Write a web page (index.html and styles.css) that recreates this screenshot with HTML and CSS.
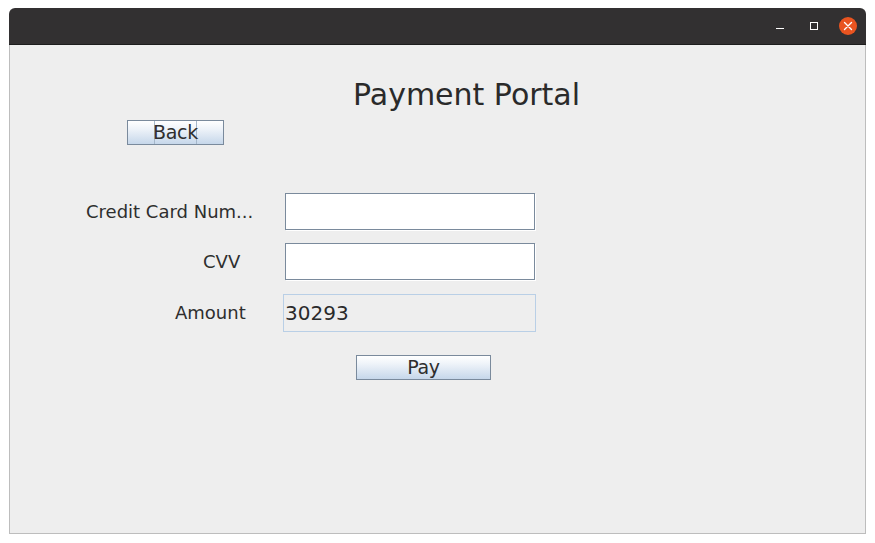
FILE: index.html
```html
<!DOCTYPE html>
<html>
<head>
<meta charset="utf-8">
<link rel="stylesheet" href="styles.css">
</head>
<body>
<div class="window">
  <div class="titlebar">
    <span class="ctl ctl-min"><svg width="10" height="10" viewBox="0 0 10 10"><line x1="1" y1="7.5" x2="9" y2="7.5" stroke="#fff" stroke-width="1"/></svg></span>
    <span class="ctl ctl-max"><svg width="10" height="10" viewBox="0 0 10 10"><rect x="1.5" y="1.5" width="7" height="7" fill="none" stroke="#fff" stroke-width="1"/></svg></span>
    <span class="ctl ctl-close"><svg width="18" height="18" viewBox="0 0 18 18"><circle cx="9" cy="9" r="9" fill="#e95420"/><path d="M5.5 5.5 L12.5 12.5 M12.5 5.5 L5.5 12.5" stroke="#fff" stroke-width="1.4" stroke-linecap="round"/></svg></span>
  </div>
  <div class="content">
    <div class="title">Payment Portal</div>
    <button class="btn btn-back"><span class="focus">Back</span></button>
    <div class="form">
      <label class="lbl lbl-card">Credit Card Num...</label>
      <div class="field"></div>
      <label class="lbl lbl-cvv">CVV</label>
      <div class="field"></div>
      <label class="lbl lbl-amount">Amount</label>
      <div class="field field-ro">30293</div>
    </div>
    <button class="btn btn-pay">Pay</button>
  </div>
</div>
</body>
</html>
```

FILE: styles.css
```css
html, body {
  margin: 0;
  padding: 0;
  background: #ffffff;
}
body {
  font-family: "DejaVu Sans", "Liberation Sans", sans-serif;
  color: #333333;
}
.window {
  margin: 8px 9px 0 9px;
  width: 857px;
  height: 526px;
  display: flex;
  flex-direction: column;
}
.titlebar {
  height: 36px;
  background: #323031;
  border-radius: 6px 6px 0 0;
  border-bottom: 1px solid #1d1d1d;
  display: flex;
  align-items: center;
  justify-content: flex-end;
  padding-right: 9px;
}
.ctl {
  display: flex;
  align-items: center;
  justify-content: center;
}
.ctl-min { margin-right: 24px; }
.ctl-max { margin-right: 20px; }
.ctl-close { width: 18px; height: 18px; }
.content {
  flex: 1;
  background: #eeeeee;
  border: 1px solid #bdbdbd;
  border-top: none;
  position: relative;
}
.title {
  margin-top: 32px;
  padding-left: 343px;
  font-size: 30px;
  line-height: 35px;
  color: #2a2a2a;
}
.btn {
  display: block;
  font-family: "DejaVu Sans", sans-serif;
  font-size: 19px;
  letter-spacing: -0.3px;
  color: #2e2e2e;
  height: 25px;
  padding: 0;
  border: 1px solid #7a8a9c;
  background: linear-gradient(#ffffff 0%, #eef3f9 35%, #c6d7ea 100%);
  line-height: 23px;
  text-align: center;
}
.btn-back {
  margin: 8px 0 0 117px;
  width: 97px;
  display: flex;
  justify-content: center;
}
.focus {
  display: flex;
  justify-content: center;
  width: 43px;
  height: 23px;
  box-sizing: border-box;
  border-left: 1px solid #a5b7ca;
  border-right: 1px solid #a5b7ca;
  white-space: nowrap;
}
.btn-pay {
  margin: 24px 0 0 346px;
  width: 135px;
}
.form {
  margin-top: 48px;
  display: grid;
  grid-template-columns: 275px 253px;
  grid-template-rows: 37px 37px 38px;
  row-gap: 13px;
}
.form .field-ro { margin-top: 1px; }
.lbl {
  font-size: 18px;
  align-self: center;
  white-space: nowrap;
  color: #2e2e2e;
}
.lbl-card { padding-left: 76px; }
.lbl-cvv { padding-left: 193px; }
.lbl-amount { padding-left: 165px; margin-top: 1px; }
.field {
  width: 250px;
  height: 37px;
  box-sizing: border-box;
  background: #ffffff;
  border: 1px solid #7a8a9c;
  box-shadow: 1px 1px 0 #ffffff;
}
.field-ro {
  margin-left: -2px;
  width: 253px;
  height: 38px;
  background: #eeeeee;
  border: 1px solid #b9cfe6;
  box-shadow: none;
  font-size: 20px;
  line-height: 36px;
  padding-left: 1px;
  color: #2a2a2a;
}
```
